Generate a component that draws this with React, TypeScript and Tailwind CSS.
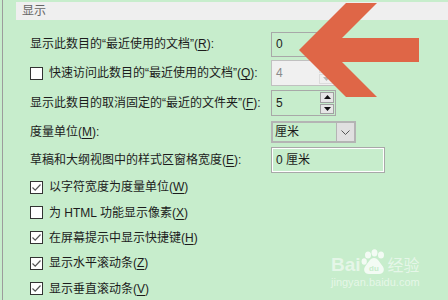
import React from "react";

const font = { fontFamily: '"Liberation Sans", "Noto Sans CJK SC", sans-serif' };

function U({ c }: { c: string }) {
  return <span className="underline underline-offset-2">{c}</span>;
}

function Check({ checked }: { checked?: boolean }) {
  return (
    <div className="w-[13px] h-[13px] border border-[#333] bg-white flex items-center justify-center shrink-0">
      {checked && (
        <svg width="11" height="11" viewBox="0 0 11 11">
          <path d="M1.5 5.5 L4.2 8.2 L9.5 2.5" fill="none" stroke="#555" strokeWidth="1.2" />
        </svg>
      )}
    </div>
  );
}

function Spinner({ disabled }: { disabled?: boolean }) {
  const c = disabled ? "#b5b5b5" : "#111";
  const box = disabled ? "border-[#dcdcdc] bg-[#f0f0f0]" : "border-[#a0a0a0] bg-[#e6e6e6]";
  return (
    <div className="flex flex-col w-[15px] h-full gap-[1px] py-[1px] pr-[1px]">
      <div className={`flex-1 flex items-center justify-center border ${box}`}>
        <svg width="7" height="4" viewBox="0 0 7 4"><path d="M0 4 L3.5 0 L7 4 Z" fill={c} /></svg>
      </div>
      <div className={`flex-1 flex items-center justify-center border ${box}`}>
        <svg width="7" height="4" viewBox="0 0 7 4"><path d="M0 0 L7 0 L3.5 4 Z" fill={c} /></svg>
      </div>
    </div>
  );
}

function Paw() {
  return (
    <svg width="26" height="26" viewBox="0 0 26 26">
      <ellipse cx="7" cy="6" rx="3" ry="3.6" fill="white" />
      <ellipse cx="13.5" cy="3.8" rx="3" ry="3.6" fill="white" />
      <ellipse cx="20" cy="6" rx="3" ry="3.6" fill="white" />
      <ellipse cx="3.2" cy="12.5" rx="2.6" ry="3.2" fill="white" />
      <path d="M13 9 C9 9 7 14 4.5 17 C2 20 3 25 8 25 L18 25 C23 25 24 20 21.5 17 C19 14 17 9 13 9 Z" fill="white" />
      <text x="13" y="22" textAnchor="middle" fontSize="8" fontWeight="bold" fill="#c7edcc" fontFamily="Liberation Sans, sans-serif">du</text>
    </svg>
  );
}

export default function App() {
  return (
    <div className="relative w-[448px] h-[300px] overflow-hidden bg-[#c7edcc] text-[12px] text-[#1c1c1c] whitespace-nowrap" style={font}>
      <div className="flex h-full pl-[2px]">
        <div className="w-[1px] h-full bg-[#9c9c9c]" />
        <div className="flex-1 flex flex-col">
          <div className="mt-[2px] ml-[13px] h-[25px] bg-[#efefef] flex items-center pl-[6px] text-[#666]">显示</div>
          <div className="flex flex-col pl-[27px] pt-[10px]">
            {/* row 1 */}
            <div className="h-[28px] flex items-center">
              <div className="w-[241px]">显示此数目的“最近使用的文档”(<U c="R" />):</div>
              <div className="w-[65px] h-[25px] border border-[#a8a8a8] flex items-center pl-[4px]">0</div>
            </div>
            {/* row 2 */}
            <div className="h-[30px] flex items-center">
              <div className="w-[241px] flex items-center gap-[6px]">
                <Check />
                <span>快速访问此数目的“最近使用的文档”(<U c="Q" />):</span>
              </div>
              <div className="w-[64px] h-[26px] border border-[#c0c0c0] bg-[#f0f0f0] flex items-center justify-between pl-[4px] text-[#8a8a8a]">
                <span>4</span>
                <Spinner disabled />
              </div>
            </div>
            {/* row 3 */}
            <div className="h-[30px] flex items-center">
              <div className="w-[241px]">显示此数目的取消固定的“最近的文件夹”(<U c="F" />):</div>
              <div className="w-[65px] h-[26px] border border-[#a8a8a8] flex items-center justify-between pl-[4px]">
                <span>5</span>
                <Spinner />
              </div>
            </div>
            {/* row 4 */}
            <div className="h-[28px] flex items-center">
              <div className="w-[241px]">度量单位(<U c="M" />):</div>
              <div className="w-[85px] h-[22px] border-2 border-[#b4b4b4] flex items-center justify-between">
                <span className="pl-[2px]">厘米</span>
                <div className="w-[18px] h-full bg-[#e0e0e0] border-l border-[#b4b4b4] flex items-center justify-center">
                  <svg width="9" height="5" viewBox="0 0 9 5"><path d="M0.5 0.5 L4.5 4.5 L8.5 0.5" fill="none" stroke="#555" strokeWidth="1" /></svg>
                </div>
              </div>
            </div>
            {/* row 5 */}
            <div className="h-[28px] flex items-center">
              <div className="w-[241px]">草稿和大纲视图中的样式区窗格宽度(<U c="E" />):</div>
              <div className="w-[114px] h-[26px] border border-[#a8a8a8]">
                <div className="w-full h-full border border-white flex items-center pl-[3px]">0 厘米</div>
              </div>
            </div>
            {[
              { t: "以字符宽度为度量单位(", u: "W", c: true, h: "h-[26px]" },
              { t: "为 HTML 功能显示像素(", u: "X", c: false, h: "h-[25px]" },
              { t: "在屏幕提示中显示快捷键(", u: "H", c: true, h: "h-[25px]" },
              { t: "显示水平滚动条(", u: "Z", c: true, h: "h-[26px]" },
              { t: "显示垂直滚动条(", u: "V", c: true, h: "h-[25px]" },
            ].map((r) => (
              <div key={r.u} className={`${r.h} flex items-center gap-[6px]`}>
                <Check checked={r.c} />
                <span>
                  {r.t}
                  <U c={r.u} />)
                </span>
              </div>
            ))}
          </div>
        </div>
      </div>

      {/* orange arrow overlay */}
      <svg className="absolute left-0 top-0" width="448" height="300" viewBox="0 0 448 300">
        <polygon points="299,50 346,3 377,3 342,38 419,38 419,62 342,62 377,97 346,97" fill="#df6647" />
      </svg>

      {/* watermark */}
      <div className="absolute left-[331px] top-[247px] flex flex-col text-white/70 opacity-80">
        <div className="flex items-end h-[28px]">
          <span className="text-[19px] font-bold leading-none mb-[1px]">Bai</span>
          <Paw />
          <span className="text-[16px] leading-none mb-[1px] ml-[1px]">经验</span>
        </div>
        <span className="text-[11px] leading-none mt-[2px]">jingyan.baidu.com</span>
      </div>
    </div>
  );
}
